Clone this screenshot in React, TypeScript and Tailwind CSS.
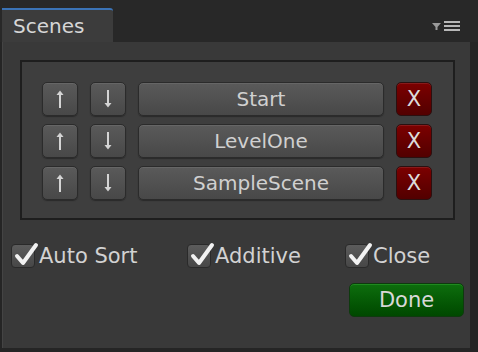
import React from "react";

const scenes = ["Start", "LevelOne", "SampleScene"];

function Arrow({ up }: { up: boolean }) {
  return (
    <svg width="12" height="20" viewBox="0 0 12 20" className={up ? "" : "rotate-180"}>
      <line x1="6" y1="3" x2="6" y2="19" stroke="#d4d4d4" strokeWidth="2" />
      <path d="M2.5 6 L6 1.5 L9.5 6 Z" fill="#d4d4d4" />
    </svg>
  );
}

function GrayButton({ className, children }: { className: string; children?: React.ReactNode }) {
  return (
    <div
      className={`flex h-[34px] items-center justify-center rounded-[5px] border border-[#2b2b2b] bg-gradient-to-b from-[#5a5a5a] to-[#484848] shadow-[inset_0_1px_0_#666,0_1px_1px_#2a2a2a] ${className}`}
    >
      {children}
    </div>
  );
}

function Check({ label, className }: { label: string; className: string }) {
  return (
    <div className={`flex items-center ${className}`}>
      <div className="relative h-[24px] w-[24px] rounded-[4px] border border-[#2a2a2a] bg-gradient-to-b from-[#5c5c5c] to-[#474747]">
        <svg width="28" height="26" viewBox="0 0 28 26" className="absolute -top-[3px] left-[1px]">
          <path d="M4 14 L10 21 L23 3" fill="none" stroke="#f2f2f2" strokeWidth="4" strokeLinecap="round" strokeLinejoin="round" />
        </svg>
      </div>
      <span className="ml-[4px] text-[21px] leading-none text-[#d2d2d2]">{label}</span>
    </div>
  );
}

export default function App() {
  return (
    <div
      className="flex h-[352px] w-[478px] flex-col bg-[#252525]"
      style={{ fontFamily: '"DejaVu Sans", sans-serif' }}
    >
      <div className="relative flex h-[42px] items-end bg-[#282828] pl-[2px]">
        <div className="flex h-[34px] w-[111px] items-center rounded-tr-[3px] border-t-2 border-[#3b73b6] bg-[#3c3c3c] pl-[11px]">
          <span className="-mt-[1px] text-[20px] leading-none text-[#d6d6d6]">Scenes</span>
        </div>
        <div className="absolute left-[432px] top-[21px] flex items-center gap-[3px]">
          <svg width="9" height="7" viewBox="0 0 9 7">
            <path d="M0 0 H9 L5.5 4 V7 H3.5 V4 Z" fill="#9a9a9a" />
          </svg>
          <div className="flex flex-col gap-[2px]">
            <div className="h-[2px] w-[16px] bg-[#b8b8b8]" />
            <div className="h-[2px] w-[16px] bg-[#b8b8b8]" />
            <div className="h-[2px] w-[16px] bg-[#b8b8b8]" />
          </div>
        </div>
      </div>
      <div className="ml-[2px] mr-[8px] mb-[4px] flex flex-1 flex-col border-l border-[#444] bg-[#393939]">
        <div className="ml-[17px] mt-[18px] flex h-[160px] w-[435px] flex-col gap-[8px] border-2 border-[#1e1e1e] bg-[#3e3e3e] pl-[20px] pt-[20px]">
          {scenes.map((s) => (
            <div key={s} className="flex gap-[12px]">
              <GrayButton className="w-[36px]">
                <Arrow up />
              </GrayButton>
              <GrayButton className="w-[36px]">
                <Arrow up={false} />
              </GrayButton>
              <GrayButton className="w-[246px]">
                <span className="-mt-[1px] text-[20px] leading-none text-[#d0d0d0]">{s}</span>
              </GrayButton>
              <div className="flex h-[34px] w-[36px] items-center justify-center rounded-[5px] border border-[#2b1010] bg-gradient-to-b from-[#7c0000] to-[#520000] shadow-[inset_0_1px_0_#8a1a1a]">
                <span className="text-[21px] leading-none text-[#dcdcdc]">X</span>
              </div>
            </div>
          ))}
        </div>
        <div className="mt-[24px] flex pl-[8px]">
          <Check label="Auto Sort" className="w-[176px]" />
          <Check label="Additive" className="w-[158px]" />
          <Check label="Close" className="" />
        </div>
        <div className="mt-[15px] flex justify-end pr-[6px]">
          <div className="flex h-[34px] w-[115px] items-center justify-center rounded-[5px] border border-[#0e3a0e] bg-gradient-to-b from-[#0e6e0e] to-[#004800] shadow-[inset_0_1px_0_#1f8a1f]">
            <span className="text-[21px] leading-none text-[#d8d8d8]">Done</span>
          </div>
        </div>
      </div>
    </div>
  );
}
